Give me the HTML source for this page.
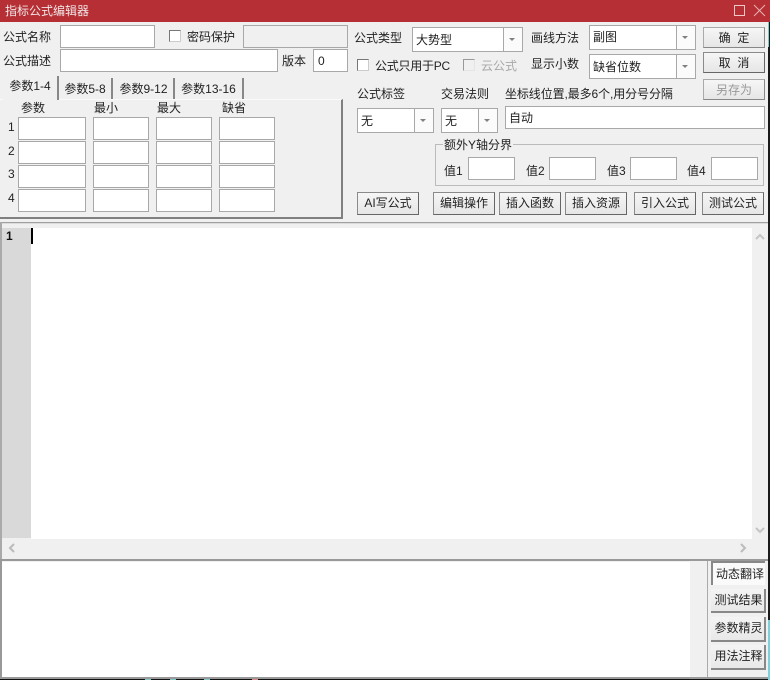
<!DOCTYPE html>
<html><head><meta charset="utf-8"><style>
html,body{margin:0;padding:0;background:#f0f0f0}
#r{position:relative;width:770px;height:680px;overflow:hidden;background:#f0f0f0;font:12px/16px "Liberation Sans","Noto Sans CJK SC",sans-serif;color:#222}
#r div,#r span{position:absolute;box-sizing:border-box}
.t{white-space:nowrap}
.i{background:#fff;border:1px solid #a8a8a8}
.b{background:linear-gradient(#f6f6f6,#e6e6e6);border:1px solid #8a8a8a;border-right-color:#666;border-bottom-color:#666;text-align:center;line-height:20px;white-space:nowrap}
.c{background:#fff;border:1px solid #a8a8a8}
.c i{position:absolute;top:0;bottom:0;right:0;width:18px;border-left:1px solid #a8a8a8;background:#fbfbfb}
.c i:after{content:"";position:absolute;left:5px;top:10px;border:3px solid transparent;border-top:3px solid #808080;border-bottom:0}
.c span{left:3px;top:3px;white-space:nowrap}
.k{width:12px;height:12px;background:#fff;border:1px solid #777;border-right-color:#ccc;border-bottom-color:#ccc}
.tb{border-right:2px solid #888;background:#f0f0f0;text-align:center;line-height:22px;white-space:nowrap}
.s{background:linear-gradient(#f4f4f4,#e8e8e8);border-bottom:2px solid #888;border-right:2px solid #888;text-align:center;line-height:22px;white-space:nowrap;padding-left:2px}
</style></head><body><div id="r">
<div style="left:0;top:0;width:770px;height:22px;background:#b52f35"></div>
<div class="t" style="left:5px;top:3px;color:#f0e6e6">指标公式编辑器</div>
<div style="left:734px;top:5px;width:11px;height:11px;border:1px solid #eec9c9"></div>
<svg style="position:absolute;left:753px;top:4px" width="13" height="13"><path d="M1 1L12 12M12 1L1 12" stroke="#e8b0b0" fill="none"/></svg>

<div class="t" style="left:3px;top:29px">公式名称</div>
<div class="i" style="left:60px;top:25px;width:95px;height:23px"></div>
<div class="k" style="left:169px;top:30px"></div>
<div class="t" style="left:187px;top:29px">密码保护</div>
<div class="i" style="left:243px;top:25px;width:105px;height:23px;background:#f0f0f0"></div>
<div class="t" style="left:3px;top:53px">公式描述</div>
<div class="i" style="left:60px;top:49px;width:218px;height:23px"></div>
<div class="t" style="left:282px;top:53px">版本</div>
<div class="i t" style="left:313px;top:49px;width:35px;height:23px;padding:3px 0 0 4px">0</div>

<div style="left:0;top:99px;width:343px;height:120px;border-top:1px solid #fafafa;border-right:2px solid #808080;border-bottom:2px solid #808080"></div>
<div class="tb" style="left:3px;top:76px;width:56px;height:24px;line-height:20px;z-index:2">参数1-4</div>
<div class="tb" style="left:60px;top:78px;width:53px;height:21px;padding-right:1px">参数5-8</div>
<div class="tb" style="left:114px;top:78px;width:61px;height:21px">参数9-12</div>
<div class="tb" style="left:175px;top:78px;width:69px;height:21px">参数13-16</div>

<div class="t" style="left:21px;top:100px">参数</div><div class="t" style="left:94px;top:100px">最小</div><div class="t" style="left:157px;top:100px">最大</div><div class="t" style="left:222px;top:100px">缺省</div>
<div class="t" style="left:8px;top:119px">1</div><div class="t" style="left:8px;top:143px">2</div><div class="t" style="left:8px;top:166px">3</div><div class="t" style="left:8px;top:190px">4</div>
<div class="i" style="left:18px;top:117px;width:68px;height:23px"></div><div class="i" style="left:93px;top:117px;width:56px;height:23px"></div><div class="i" style="left:156px;top:117px;width:56px;height:23px"></div><div class="i" style="left:219px;top:117px;width:56px;height:23px"></div>
<div class="i" style="left:18px;top:141px;width:68px;height:23px"></div><div class="i" style="left:93px;top:141px;width:56px;height:23px"></div><div class="i" style="left:156px;top:141px;width:56px;height:23px"></div><div class="i" style="left:219px;top:141px;width:56px;height:23px"></div>
<div class="i" style="left:18px;top:165px;width:68px;height:23px"></div><div class="i" style="left:93px;top:165px;width:56px;height:23px"></div><div class="i" style="left:156px;top:165px;width:56px;height:23px"></div><div class="i" style="left:219px;top:165px;width:56px;height:23px"></div>
<div class="i" style="left:18px;top:189px;width:68px;height:23px"></div><div class="i" style="left:93px;top:189px;width:56px;height:23px"></div><div class="i" style="left:156px;top:189px;width:56px;height:23px"></div><div class="i" style="left:219px;top:189px;width:56px;height:23px"></div>

<div class="t" style="left:354px;top:30px">公式类型</div>
<div class="c" style="left:412px;top:27px;width:111px;height:25px"><span style="top:4px">大势型</span><i></i></div>
<div class="t" style="left:531px;top:30px">画线方法</div>
<div class="c" style="left:589px;top:25px;width:107px;height:25px"><span>副图</span><i></i></div>
<div class="c" style="left:589px;top:54px;width:107px;height:25px"><span style="top:4px">缺省位数</span><i></i></div>
<div class="b" style="left:703px;top:27px;width:62px;height:21px;border-color:#aaa;border-right-color:#888;border-bottom-color:#888">确&nbsp;&nbsp;定</div>
<div class="b" style="left:703px;top:52px;width:62px;height:21px">取&nbsp;&nbsp;消</div>
<div class="b" style="left:703px;top:79px;width:62px;height:21px;color:#999;border-color:#aaa;border-right-color:#888;border-bottom-color:#888">另存为</div>

<div class="k" style="left:357px;top:59px"></div>
<div class="t" style="left:375px;top:58px;letter-spacing:-.25px">公式只用于PC</div>
<div class="k" style="left:463px;top:59px;background:#f0f0f0;border-color:#999 #e4e4e4 #e4e4e4 #999"></div>
<div class="t" style="left:481px;top:58px;color:#a8a8a8">云公式</div>
<div class="t" style="left:531px;top:56px">显示小数</div>

<div class="t" style="left:357px;top:86px">公式标签</div>
<div class="t" style="left:441px;top:86px">交易法则</div>
<div class="t" style="left:505px;top:86px;letter-spacing:-.1px">坐标线位置,最多6个,用分号分隔</div>
<div class="c" style="left:357px;top:108px;width:77px;height:25px"><span style="top:4px">无</span><i></i></div>
<div class="c" style="left:441px;top:108px;width:57px;height:25px"><span style="top:4px">无</span><i></i></div>
<div class="i t" style="left:505px;top:106px;width:260px;height:23px;padding:3px 0 0 3px">自动</div>

<div style="left:435px;top:144px;width:329px;height:42px;border:1px solid #bbb"></div>
<div class="t" style="left:443px;top:137px;background:#f0f0f0;padding:0 1px">额外Y轴分界</div>
<div class="t" style="left:444px;top:163px">值1</div><div class="i" style="left:468px;top:157px;width:47px;height:23px"></div>
<div class="t" style="left:526px;top:163px">值2</div><div class="i" style="left:549px;top:157px;width:47px;height:23px"></div>
<div class="t" style="left:607px;top:163px">值3</div><div class="i" style="left:630px;top:157px;width:47px;height:23px"></div>
<div class="t" style="left:687px;top:163px">值4</div><div class="i" style="left:711px;top:157px;width:47px;height:23px"></div>

<div class="b" style="left:357px;top:192px;width:62px;height:23px">AI写公式</div>
<div class="b" style="left:433px;top:192px;width:62px;height:23px">编辑操作</div>
<div class="b" style="left:499px;top:192px;width:62px;height:23px">插入函数</div>
<div class="b" style="left:565px;top:192px;width:62px;height:23px">插入资源</div>
<div class="b" style="left:634px;top:192px;width:62px;height:23px">引入公式</div>
<div class="b" style="left:702px;top:192px;width:62px;height:23px">测试公式</div>

<div style="left:0;top:222px;width:768px;height:1px;background:#a0a0a0"></div>
<div style="left:0;top:223px;width:768px;height:1px;background:#dcdcdc"></div>
<div style="left:0;top:222px;width:2px;height:338px;background:#aaa"></div>
<div style="left:2px;top:228px;width:29px;height:310px;background:#d9d9d9"></div>
<div style="left:31px;top:228px;width:721px;height:311px;background:#fff"></div>
<div class="t" style="left:6px;top:228px;font-weight:bold;color:#111">1</div>
<div style="left:31px;top:228px;width:2px;height:16px;background:#000"></div>
<svg style="position:absolute;left:754px;top:233px" width="12" height="8"><path d="M2 6L6 2L10 6" stroke="#c4c4c4" stroke-width="2" fill="none"/></svg>
<svg style="position:absolute;left:754px;top:526px" width="12" height="8"><path d="M2 2L6 6L10 2" stroke="#c4c4c4" stroke-width="2" fill="none"/></svg>
<svg style="position:absolute;left:8px;top:542px" width="8" height="12"><path d="M6 2L2 6L6 10" stroke="#bbb" stroke-width="2" fill="none"/></svg>
<svg style="position:absolute;left:739px;top:542px" width="8" height="12"><path d="M2 2L6 6L2 10" stroke="#bbb" stroke-width="2" fill="none"/></svg>

<div style="left:0;top:559px;width:768px;height:2px;background:#999"></div>
<div style="left:0;top:561px;width:2px;height:117px;background:#999"></div>
<div style="left:2px;top:562px;width:688px;height:115px;background:#fff"></div>
<div style="left:707px;top:561px;width:1px;height:117px;background:#aaa"></div>
<div style="left:711px;top:561px;width:54px;height:24px;background:#fafafa;border-left:2px solid #888;border-top:2px solid #888;text-align:center;line-height:23px;white-space:nowrap;padding-left:2px">动态翻译</div>
<div class="s" style="left:711px;top:589px;width:55px;height:24px">测试结果</div>
<div class="s" style="left:711px;top:617px;width:55px;height:25px">参数精灵</div>
<div class="s" style="left:711px;top:645px;width:55px;height:25px">用法注释</div>

<div style="left:0;top:677px;width:768px;height:2px;background:#999"></div>
<div style="left:0;top:679px;width:770px;height:1px;background:#111"></div>
<div style="left:768px;top:22px;width:2px;height:658px;background:#1a1a1a"></div>
<div style="left:768px;top:22px;width:1px;height:25px;background:#7fc8c8"></div>
<div style="left:768px;top:620px;width:2px;height:60px;background:#7fd0d8"></div>
<div style="left:145px;top:679px;width:6px;height:1px;background:#7fc8c8"></div>
<div style="left:170px;top:679px;width:6px;height:1px;background:#7fc8c8"></div>
<div style="left:204px;top:679px;width:6px;height:1px;background:#7fc8c8"></div>
<div style="left:252px;top:679px;width:6px;height:1px;background:#d88"></div>
</div></body></html>
